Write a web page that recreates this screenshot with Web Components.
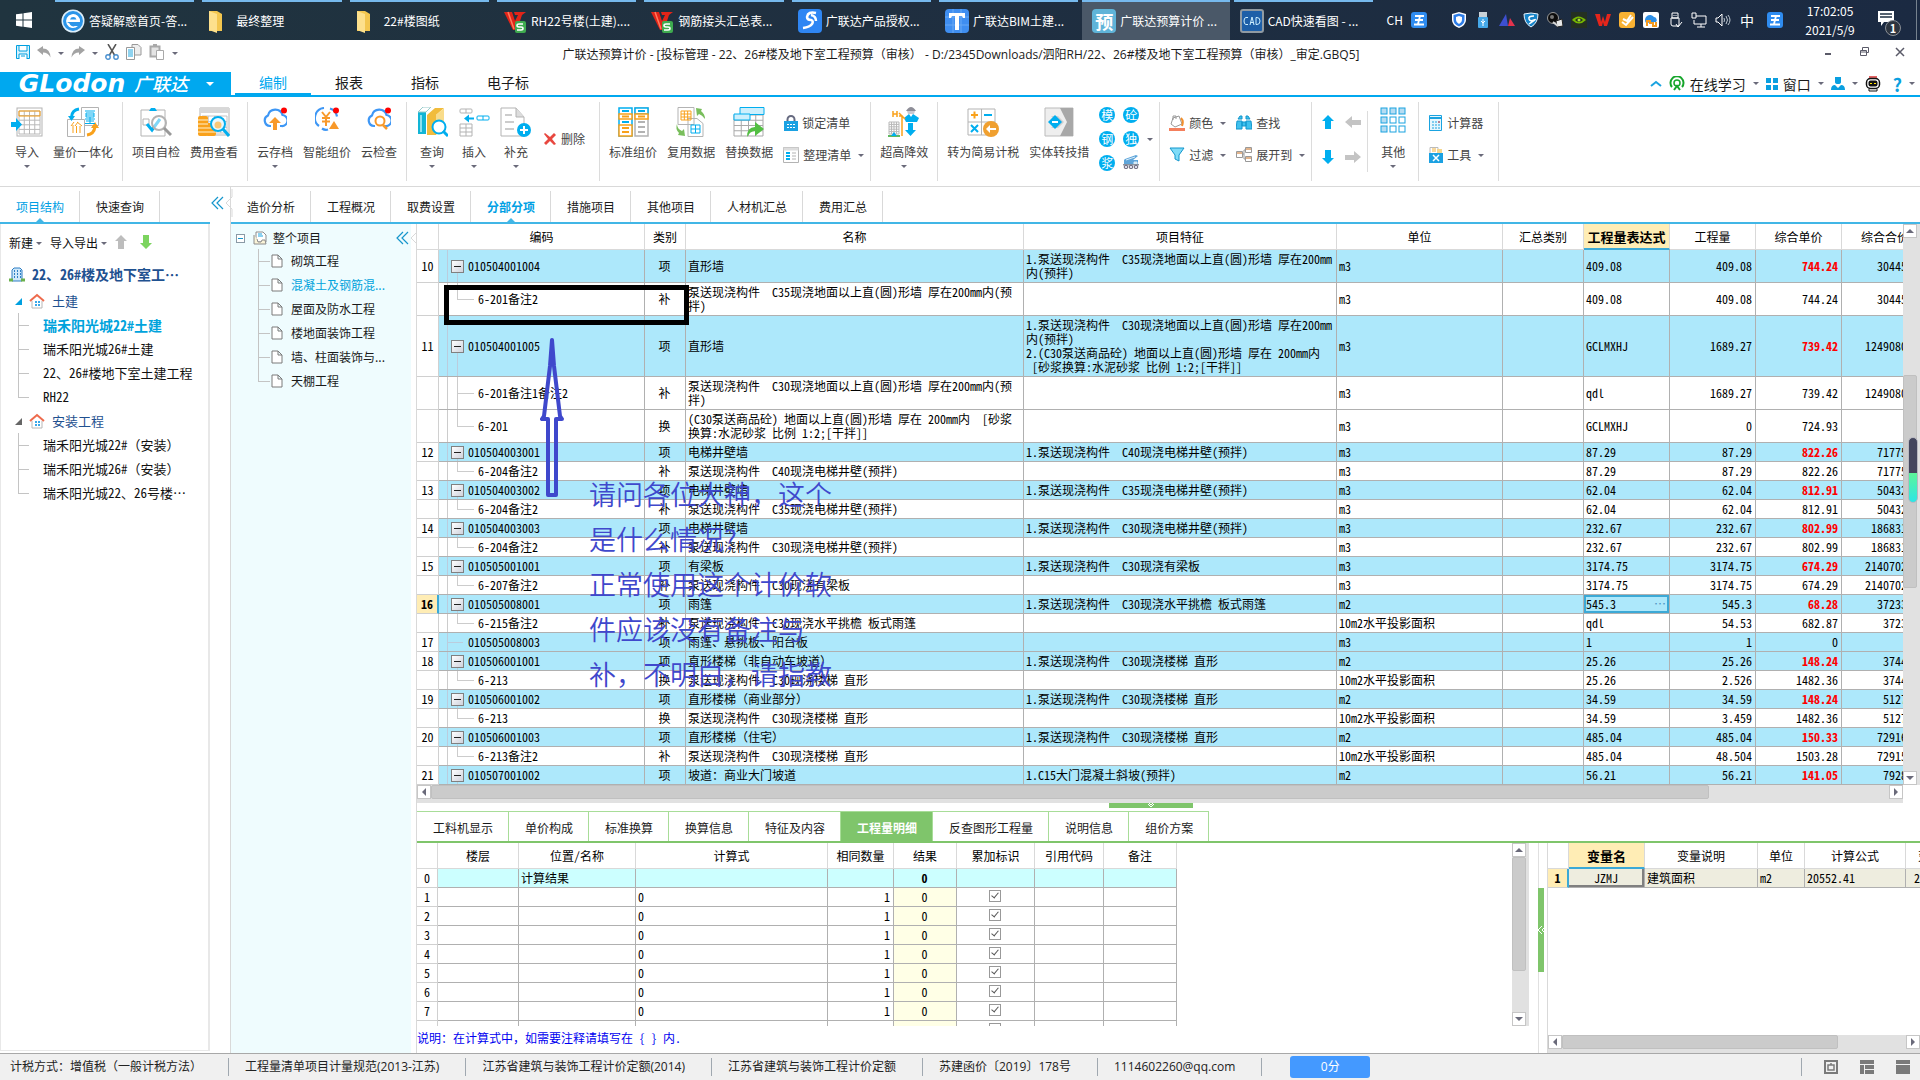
<!DOCTYPE html>
<html lang="zh-CN">
<head>
<meta charset="utf-8">
<title>广联达预算计价</title>
<style>
html,body{margin:0;height:100%}
body{font:12px/16px "Noto Sans CJK SC",sans-serif;color:#1a1a1a;background:#fff;overflow:hidden}
</style>
</head>
<body>
<budget-app></budget-app>
<script>
const SONG = '"Noto Sans Mono CJK SC","Noto Sans CJK SC",monospace';
const BASE = `*{box-sizing:border-box}button{font:inherit;color:inherit;background:none;border:0;padding:0;margin:0;cursor:pointer;text-align:inherit}`;
function define(name, css, html, after){
  const t = document.createElement('template');
  customElements.define(name, class extends HTMLElement{
    constructor(){ super(); this.attachShadow({mode:'open'}); }
    connectedCallback(){
      t.innerHTML = `<style>${BASE}${css}</style>` + (typeof html === 'function' ? html(this) : html);
      this.shadowRoot.replaceChildren(t.content.cloneNode(true));
      if(after) after(this, this.shadowRoot);
    }
  });
}

/* ---------- icons ---------- */
const B='#00aeef', O='#f9a11b', G='#b3b3b3';
const gridLines=(x,y,w,h,nx,ny,c)=>{let s='';for(let i=0;i<=nx;i++)s+=`M${x+w*i/nx} ${y}v${h}`;for(let j=0;j<=ny;j++)s+=`M${x} ${y+h*j/ny}h${w}`;return `<path d="${s}" stroke="${c}" fill="none"/>`};
const cloud='<path d="M8 19H7A5.5 5.5 0 0 1 5 8.5 7.5 7.500 0 0 1 19.500 8 5.500 5.500 0 0 1 18.500 19H17" fill="none" stroke="#3e97f5" stroke-width="2.200"/><circle cx="21" cy="3.500" r="3" fill="#f00"/>';
const folder='<path d="M1 2h8l5 3v17H1z" fill="#f3c64f"/><path d="M1 2l8 3v19l-8-3z" fill="#fde08c"/>';
const wps='<path d="M1 3h8l3 9 3-6h-3l-1-3h12l-4 3-5 15h-4z" fill="#e22418"/><path d="M5 3l6 17" stroke="#ff7a5f" stroke-width="1.500"/><rect x="12" y="12" width="11" height="12" rx="2" fill="#3fab4f"/><path d="M20 15h-4q-2 0-2 1.500t2 1.500h2q2 0 2 1.500t-2 1.500h-4" stroke="#fff" stroke-width="1.500" fill="none"/>';
const wang='<rect width="16" height="16" rx="3" fill="#2f8cf0"/><path d="M4 4h9M4 8h8M3 12.500h10M9 4L7 12" stroke="#fff" stroke-width="1.800" fill="none"/>';
const house='<path d="M3 8v7h10V8" fill="#fff" stroke="#b8b8b8"/><path d="M1 8l7-6 7 6" stroke="#ee6a4c" stroke-width="2" fill="none"/><path d="M6 8h2v2H6zM9 8h2v2H9zM6 11h2v2H6zM9 11h2v2H9z" fill="#3aa7e8"/>';
const ICONS={
 win:[16,16,'<path d="M0 2.300L6.500 1.400v6.200H0zM7.500 1.200L16 0v7.600H7.500zM0 8.600h6.500v6.200L0 13.800zM7.500 8.600H16V16l-8.500-1.200z" fill="#fff"/>'],
 ie:[24,24,'<circle cx="12" cy="12" r="11.500" fill="#dff0fb"/><circle cx="12" cy="12" r="10" fill="#2b95e9"/><path d="M6 13h13a7 7 0 1 0-2 4h-3a4 4 0 0 1-5.500-2.500" fill="#fff"/><path d="M9 10.500h6.500a3.400 3.400 0 0 0-6.500 0z" fill="#2b95e9"/>'],
 folder:[16,24,folder], wps:[24,24,wps],
 gauth:[24,24,'<rect width="24" height="24" rx="4" fill="#2f86f3"/><path d="M18 4q-8-2-9 4 0 3 4 3 3 1 1 4t-9 4M13 6q5 1 5 6" stroke="#fff" stroke-width="2.500" fill="none"/>'],
 gbim:[24,24,'<rect width="24" height="24" rx="4" fill="#3f8ef0"/><path d="M0 8h24M0 16h24M8 0v24M16 0v24" stroke="#69a9f5"/><path d="M4 4h16v5h-2l-1-2h-3v14h-4V7H7L6 9H4z" fill="#fff"/>'],
 cad:[24,24,'<rect x="1" y="1" width="22" height="22" rx="2" fill="#1d5fa8" stroke="#8f9aa3" stroke-width="2"/><path d="M8 8.500H6Q4 8.500 4 12t2 3.500h2M10 16l2-8 2 8M10.500 13.500h3M16 8.500v7h1q3 0 3-3.500t-3-3.500z" stroke="#cdefff" fill="none"/>'],
 wang:[16,16,wang],
 shield:[16,16,'<path d="M8 0l7 2v6q0 5-7 8-7-3-7-8V2z" fill="#fff"/><path d="M8 1.500L13.500 3v5q0 4-5.500 6.500Q2.500 12 2.500 8V3z" fill="#2d7de8"/><path d="M8 4l3 1v3q0 2.500-3 4-3-1.500-3-4V5z" fill="#fff"/>'],
 usbblue:[16,16,'<rect x="4" y="0" width="8" height="5" fill="#c9d2d8"/><rect x="3" y="5" width="10" height="11" rx="1" fill="#45a8e8"/><path d="M8 7v7M6 9l2 2 2-2" stroke="#fff" fill="none"/>'],
 tri:[16,16,'<path d="M7 2L0 14h9z" fill="#3d4fd0"/><path d="M11 6l-2 8h7z" fill="#e2334d"/>'],
 shield2:[16,16,'<path d="M1 2l7-1 7 1q0 9-7 13Q1 11 1 2z" fill="#1684c9" stroke="#e8f5ff"/><path d="M11 4Q5 4 6 7t5 1-5 4" stroke="#fff" stroke-width="1.500" fill="none"/>'],
 disc:[16,16,'<circle cx="6" cy="6" r="5.500" fill="#0c0c0c" stroke="#999"/><path d="M9 9l6-2 1 7-6 1z" fill="#e8e8e8" stroke="#222"/><circle cx="5" cy="5" r="2" fill="#777"/><path d="M6 10l5 4" stroke="#d5d5d5" stroke-width="2"/>'],
 nv:[16,16,'<rect width="16" height="16" fill="#243022"/><path d="M1 8q6-7 14 0-7 7-14 0z" fill="#77b900"/><path d="M4 8q4-4 8 0-4 4-8 0z" fill="#243022"/><circle cx="8" cy="8" r="1.500" fill="#a9e03a"/>'],
 wred:[16,16,'<path d="M0 2h5l1 8 2-6 2 6 2-8h4l-4 12H9L8 10l-1 4H4z" fill="#e5251b"/>'],
 orange:[16,16,'<rect width="16" height="16" rx="3" fill="#f9b233"/><path d="M3 10l4 3 7-8M4 7l4 2 4-6" stroke="#fff" stroke-width="2" fill="none"/>'],
 cloudapp:[16,16,'<rect width="16" height="16" rx="2" fill="#fff"/><path d="M3 11A4 4 0 1 1 11 5a3 3 0 0 1 2 5" fill="#2e8fe6"/><path d="M4 14V9h3v2h3v3h3v-4" stroke="#f49b20" stroke-width="2" fill="none"/>'],
 usb:[16,16,'<path d="M5 1h6v5H5zM4 6h8v8H6q-2 0-2-2zM7 3v1M9 3v1M9 12l2 3 4-5" stroke="#fff" fill="none"/>'],
 pc:[16,16,'<path d="M5 4h10v8H3V8M10 12v3M6 15h8M1 1h4v5H1z" stroke="#fff" fill="none"/>'],
 vol:[16,16,'<path d="M1 6h2l4-4v12l-4-4H1z" stroke="#fff" fill="none"/><path d="M9 6q1 2 0 4M11 4q3 4 0 8M13 3q4 5 0 10" stroke="#bcc6cf" fill="none"/>'],
 note:[28,28,'<path d="M2 3h16v11H8l-3 4v-4H2z" fill="#fff"/><path d="M4 6h12M4 9h12" stroke="#1d2e40" stroke-width="1.500"/><circle cx="17" cy="20" r="7.500" fill="#2d3540" stroke="#8a8f96"/>'],
 save:[14,14,'<path d="M.5.5h13v13H.5z" stroke="#00a0e0" fill="#d7f2fd"/><path d="M3 1v5h8V1M3 14V9h8v5M5 11h4" stroke="#00a0e0" fill="#fff"/>'],
 undo:[14,14,'<path d="M0 5l6-4v2.500q7 0 7.500 9Q11 7.500 6 7.500V10z" fill="#a3a3a3"/>'],
 redo:[14,14,'<path d="M14 5L8 1v2.500Q1 3.500.5 12.500 3 7.500 8 7.500V10z" fill="#a3a3a3"/>'],
 cut:[14,16,'<path d="M3 0l6.500 11M11 0L4.500 11" stroke="#555" stroke-width="1.500"/><circle cx="3" cy="13" r="2.200" stroke="#4a90d0" fill="none" stroke-width="1.400"/><circle cx="11" cy="13" r="2.200" stroke="#4a90d0" fill="none" stroke-width="1.400"/>'],
 copy:[16,16,'<path d="M6 .5h6l3 3V11H6z" fill="#eee" stroke="#999"/><path d="M.5 3.500h8v12h-8z" fill="#fff" stroke="#999"/><path d="M2 6h5M2 8h5M2 10h5M2 12h5" stroke="#1ea7e0"/>'],
 paste:[16,16,'<path d="M1.500 2.500h9v10h-9z" fill="#e4e4e4" stroke="#a9a9a9" stroke-width="2"/><path d="M4 0h4v3H4z" fill="#a9a9a9"/><path d="M7.500 6.500h7v9h-7z" fill="#fff" stroke="#a9a9a9"/>'],
 min:[12,12,'<path d="M3 8h6" stroke="#5a5a68" stroke-width="2"/>'],
 rest:[12,12,'<path d="M2.500 4.500h6v5h-6zM4.500 4V1.500h6v5H9M2.500 6h6" stroke="#5a5a68" fill="none"/>'],
 close:[12,12,'<path d="M2 2l8 8M10 2l-8 8" stroke="#5a5a68" stroke-width="1.500"/>'],
 caret:[12,12,'<path d="M1 8l5-4 5 4" stroke="#1aa3e0" stroke-width="2" fill="none"/>'],
 headset:[16,16,'<path d="M3 11a6.500 6.500 0 1 1 10 0M5 14l3-4 3 4" stroke="#16a52b" stroke-width="2" fill="none"/><circle cx="8" cy="7" r="3" fill="none" stroke="#16a52b" stroke-width="1.500"/>'],
 four:[12,12,'<path d="M0 0h5v5H0zM7 0h5v5H7zM0 7h5v5H0zM7 7h5v5H7z" fill="#0a9fe0"/>'],
 person:[14,14,'<path d="M4 0h6v5q0 2-3 2T4 5zM0 13q0-5 4-5l3 3 3-3q4 0 4 5z" fill="#0a9fe0"/>'],
 robot:[16,16,'<path d="M4 1h8" stroke="#d33" stroke-width="1.500"/><rect x="1.500" y="2.500" width="13" height="10" rx="4" fill="#fff" stroke="#111" stroke-width="1.500"/><rect x="3.500" y="4.500" width="9" height="6" rx="2" fill="#111"/><path d="M5 8l1-1 1 1M9 8l1-1 1 1" stroke="#ffe200" fill="none"/><path d="M4 13v2h8v-2" stroke="#111" fill="none"/>'],
 import:[32,30,`<rect x="6" y="1" width="25" height="28" fill="#fff" stroke="${G}"/>${gridLines(8,4,21,23,4,5,'#b8b8b8')}<path d="M8 4h21v5H8z" fill="none" stroke="${O}"/><path d="M0 15h5v-4l6 6.500-6 6.500v-4H0z" fill="${B}"/>`],
 qp:[32,30,`<path d="M14.500.5h17v18h-17z" fill="#fff" stroke="${G}"/><path d="M.5 12.500h17v17H.5z" fill="#fff" stroke="${G}"/><path d="M12 2Q5 3 4.500 10" stroke="${B}" stroke-width="3" fill="none"/><path d="M1 9h7l-3.500 5z" fill="${B}"/><path d="M20 28q7-1 8-8" stroke="${O}" stroke-width="3" fill="none"/><path d="M24 21h8l-4-6z" fill="${O}"/><path d="M18 4h10M19 6h8v4h-8zM19 8h8M18 12h10M19 14h8M18 16.500h10M23 10v6.500" stroke="${B}" fill="none"/><path d="M7 15l-3 4M6 18v8M11 15l-3 4M10 15l5 4M9.500 19v7M13 19v7" stroke="${O}" fill="none"/>`],
 check:[32,30,`<path d="M1 3h24v26H1z" fill="#fff" stroke="${G}"/><path d="M9 4h8l-2-3h-4z" fill="${B}"/><path d="M3 12h6v6H3z" fill="none" stroke="${G}"/><path d="M7 17l5 6 8-11" stroke="${B}" stroke-width="3" fill="none"/><circle cx="19" cy="16" r="7" fill="#fff" fill-opacity=".5" stroke="${G}" stroke-width="2"/><path d="M24 21l7 7" stroke="#999" stroke-width="3"/>`],
 fee:[32,30,`<path d="M2 1h29v27H2z" fill="#fff" stroke="${G}"/><path d="M2 1h29v5H2z" fill="#d8d8d8"/>${gridLines(4,9,25,17,4,3,'#c4c4c4')}<rect x="0" y="9" width="10" height="20" rx="2" fill="${O}"/><rect x="8" y="16" width="10" height="13" rx="2" fill="${O}"/><path d="M0 13h10M0 17h10M0 21h18M0 25h18" stroke="#fff2d0"/><circle cx="20" cy="17" r="7" fill="#e8f8fe" stroke="${B}" stroke-width="2"/><circle cx="20" cy="18" r="3.500" fill="#f8c777"/><path d="M25 22l6 7" stroke="${B}" stroke-width="3"/>`],
 cloudup:[24,24,cloud+'<path d="M12 10l6 6h-4v7h-4v-7H6z" fill="#f8992a"/>'],
 smart:[24,24,'<path d="M9 1A10 10 0 0 0 4 19M15 1.500a10 10 0 0 1 7 8M7 21.500q3 2 6 1" fill="none" stroke="#3e97f5" stroke-width="2.200"/><path d="M7 5l4 5 4-5M7 11h8M7 14.500h8M11 10v9" stroke="#f8992a" stroke-width="2" fill="none"/><path d="M19 14l5 8H14z" fill="#f8992a"/><circle cx="21" cy="3.500" r="3" fill="#f00"/>'],
 cloudq:[24,24,cloud+'<circle cx="13" cy="14" r="4.500" fill="#fff" stroke="#f8992a" stroke-width="2"/><path d="M16 18l4 4" stroke="#f8992a" stroke-width="2.500"/>'],
 books:[32,30,`<path d="M2 5l5-5h8l-5 5v22H2z" fill="#12b5d6"/><path d="M2 5l5-5h8l-5 5z" fill="#fff" stroke="#9cc"/><path d="M11 8l8-7h9l-8 7v20h-9z" fill="#f1bc3c"/><path d="M20 8l8-7v19l-8 8z" fill="#f9dc8a"/><path d="M5 8v17" stroke="#8ce1f0" stroke-width="2"/><circle cx="23" cy="20" r="6.500" fill="#fff" stroke="${B}" stroke-width="2"/><path d="M27 24l5 5" stroke="${B}" stroke-width="3"/>`],
 insert:[32,30,`<rect x="2" y="2" width="12" height="4" rx="1" fill="#fff" stroke="${G}"/><path d="M8 2v4" stroke="${G}"/><path d="M6 11.500l5-4v3h5v2h-5v3z" fill="${B}"/><rect x="19" y="9" width="12" height="4" rx="1" fill="#fff" stroke="${B}"/><path d="M25 9v4" stroke="${B}"/>${gridLines(2,17,12,12,2,3,G)}`],
 add:[32,30,`<path d="M1 1h15l8 9v19H1z" fill="#fff" stroke="${G}"/><path d="M16 1v9h8" fill="#ddd" stroke="${G}"/><path d="M5 8h7M5 15h9M5 22h9" stroke="#ccc" stroke-width="2"/><circle cx="24" cy="23" r="7" fill="${B}"/><path d="M24 19v8M20 23h8" stroke="#fff" stroke-width="2"/>`],
 del:[12,12,'<path d="M1 0l5 4 4-4 2 2-4 4 4 5-2 1-4-4-4 4-2-2 4-4-4-5z" fill="#e8473f"/>'],
 std:[32,30,`<path d="M2 1h13v28H2z" fill="#fff" stroke="${B}" stroke-width="1.500"/><path d="M18 1h13v28H18z" fill="#fff" stroke="${G}" stroke-width="1.500"/><path d="M18 1h13v6H18z" fill="#fff" stroke="${B}" stroke-width="1.500"/><path d="M2 7h13v5H2zM2 18h13v11H2z" fill="#fff" stroke="${O}" stroke-width="1.500"/><path d="M18 7h13v5H18z" fill="#fff" stroke="${O}" stroke-width="1.500"/><path d="M5 4h7M5 15h7M21 4h7" stroke="${B}" stroke-width="2"/><path d="M5 9.500h7M5 21h7M5 25h7M21 9.500h7" stroke="${O}" stroke-width="2"/><path d="M21 15h7M21 20h7M21 25h7" stroke="${G}" stroke-width="2"/>`],
 reuse:[32,30,`<path d="M3 .5h16v17H3zM13 11.500h9l6 5v13H13z" fill="#fff" stroke="${G}"/>${gridLines(6,4,10,9,3,3,O)}${gridLines(16,18,9,8,2,2,B)}<path d="M21 1l6 1-1 2q4 3 4 8-3-4-6-5l-2 2z" fill="#79be5c"/><path d="M2 17q0 5 5 7l2-2 1 7-7-1 1-2q-4-4-2-9z" fill="#79be5c"/>`],
 replace:[32,30,`${gridLines(1,8,29,21,4,4,'#a9a9a9')}<path d="M7 .5h24v7H7z" fill="#cdeffc" stroke="${B}"/><path d="M1 7h16v6H1z" fill="#cdeffc" stroke="${B}"/><path d="M14 30q0-10 8-10v-5l9 7-9 7v-5q-5 0-8 6z" fill="#53bf43"/>`],
 lock:[14,16,`<path d="M3.500 8V4.500a3.500 3.500 0 0 1 7 0V8" stroke="#666a80" stroke-width="2" fill="none"/><path d="M0 6h14v10H0z" fill="#1ba1e2"/><path d="M3 9.500h8M3 12.500h8" stroke="#fff" stroke-dasharray="2 1"/>`],
 tidy:[16,16,`<path d="M.5.5h15v15H.5z" fill="#fff" stroke="${G}"/><path d="M.5.5h15v3H.5z" fill="#ddd"/><path d="M3 6h4M3 9h4M3 12h4" stroke="${B}" stroke-width="2"/><path d="M9 6h4M9 9h4M9 12h4" stroke="${G}"/>`],
 high:[32,30,`<path d="M18 4q5-8 10 0z" fill="#8e8e98"/><path d="M19 4h8l-1 3h-6z" fill="#c9c9d2"/><path d="M16 11l5-4 2 3 2-3 6 4-2 4H18z" fill="${B}"/><path d="M20 16h5v7h3l-5.500 6-5.500-6h3z" fill="${B}"/><path d="M5 4v6M9 4v6M5 7h4M14 29V9h-3M11 6l6 6" stroke="${O}" stroke-width="1.500" fill="none"/>${gridLines(1,15,10,12,4,5,'#b9b9b9')}<path d="M0 29h12" stroke="#5fb85f" stroke-width="2"/><path d="M3 29l3-4 3 4z" fill="${B}"/>`],
 simple:[32,30,`<path d="M1 2h27v26H1z" fill="#fff" stroke="${G}"/><path d="M14.500 2v26M1 15h27" stroke="${G}"/><path d="M4 8h7M7.500 4.500v7" stroke="${O}" stroke-width="2"/><path d="M17 8h8" stroke="${B}" stroke-width="2"/><path d="M4 18l7 7M11 18l-7 7" stroke="${B}" stroke-width="2"/><circle cx="24" cy="22" r="8" fill="#f0a030"/><path d="M19 22l4-4v3h6v2h-6v3z" fill="#fff"/>`],
 entity:[30,30,`<path d="M1 1h28v28H1z" fill="#eee" stroke="#bbb"/><path d="M16 1h13v28H16l7-14z" fill="#a8a8a8"/><path d="M13 15L7 9h7l6 6-6 6H7z" fill="#cfcfcf"/><path d="M4 15l7-7 7 7-7 7z" fill="${B}"/><path d="M8 15h6" stroke="#fff" stroke-width="2"/>`],
 truck:[16,14,'<path d="M2 4L13 0l2 1-5 4h5v5H1V5z" fill="#5ea5da"/><path d="M3 5l9-3M11 7h3v2h-3z" stroke="#d9ecf8" fill="#d9ecf8"/><path d="M0 9h16v1.500H0z" fill="#8a93a0"/><circle cx="3" cy="12" r="1.800" fill="#dde" stroke="#667"/><circle cx="8" cy="12" r="1.800" fill="#dde" stroke="#667"/><circle cx="13" cy="12" r="1.800" fill="#dde" stroke="#667"/>'],
 paint:[16,16,'<path d="M4 3l6-2 3 8-7 3-4-3z" fill="#fff" stroke="#999"/><path d="M4 5V1h3v3" stroke="#999" fill="none"/><path d="M12 3q3 3 1 8" stroke="#f28f2c" stroke-width="2" fill="none"/><path d="M0 13h16v3H0z" fill="#f47f5c"/>'],
 find:[16,16,`<path d="M2 4h4v-3h-2zM10 1h2l2 3h-4zM1 6h5v8H0zM10 6h5l1 8h-6zM6 7h4v4H6z" fill="#3fc1ee" stroke="#1396cc"/>`],
 filter:[16,16,'<path d="M1 1h14l-5 7v6l-4-2V8z" fill="#7fdcf8" stroke="#1396cc"/>'],
 expand:[16,16,'<path d="M.5 4.500h6v6h-6zM9.500.5h6v5h-6zM9.500 9.500h6v5h-6zM6 7h2v-4h1.500M8 7v5h1.500" fill="#fff" stroke="#999"/><path d="M1 5h5v2H1zM10 1h5v2h-5zM10 10h5v2h-5z" fill="#e2b48c"/>'],
 up:[12,14,'<path d="M6 0l6 6H9v8H3V6H0z" fill="currentColor"/>'],
 down:[12,14,'<path d="M6 14l6-6H9V0H3v8H0z" fill="currentColor"/>'],
 left:[16,14,'<path d="M0 7l7-6v4h9v5H7v3z" fill="currentColor"/>'],
 right:[16,14,'<path d="M16 7L9 1v4H0v5h9v3z" fill="currentColor"/>'],
 other:[26,26,[0,1,2,3,4,5,6,7,8].map(i=>`<rect x="${1+(i%3)*9}" y="${1+Math.floor(i/3)*9}" width="6" height="6" fill="${i<4||i==6?'#b5dcf2':'#fff'}" stroke="#1aa3e0"/>`).join('')],
 calc:[13,16,'<path d="M.5.5h12v15H.5z" fill="#e7f7fe" stroke="#1aa3e0"/><path d="M1 3h11" stroke="#1aa3e0" stroke-width="2"/><path d="M3 7h8M3 10h8M3 13h8" stroke="#1aa3e0" stroke-dasharray="2 1"/><path d="M9 7h2" stroke="#e33"/>'],
 tool:[14,16,'<path d="M1 .5h8v6H1z" fill="#fff" stroke="#bbb"/><path d="M3 2h4M3 4h4" stroke="#f0b23c"/><path d="M8 2h5v5H8z" fill="#f4d68f"/><path d="M0 6h14v10H0z" fill="#1ba1e2"/><path d="M4 8l6 6M10 8l-6 6" stroke="#fff" stroke-width="1.500"/>'],
 building:[16,16,'<path d="M3 15V4l2-2h6l2 2v11z" fill="#cfe8fa" stroke="#2f7fc4"/><path d="M5 5h1M8 5h1M11 5h1M5 8h1M8 8h1M11 8h1M5 11h1M8 11h1M11 11h1" stroke="#2f7fc4" stroke-width="2"/><path d="M0 14h4M12 14h4" stroke="#6ab04c" stroke-width="3"/>'],
 house:[16,16,house],
 project:[14,14,'<path d="M3 1h7l3 3v7H3z" fill="#fff" stroke="#8c8c8c"/><path d="M1 4v9h12l-1-4H9l-1 2H5L4 8" fill="#faf4d8" stroke="#8c8c8c"/><path d="M5 3h4M5 5h5" stroke="#1aa3e0"/>'],
 doc:[12,14,'<path d="M1 1h6l4 4v8H1zM7 1v4h4" fill="#fff" stroke="#7a7a7a"/>'],
 collapse:[24,32,'<path d="M8 10l-6 6 6 6M13 10l-6 6 6 6" stroke="#1596cc" stroke-width="1.200" fill="none"/><path d="M22 2v8l-6 6 6 6v8" stroke="#d9d9d9" fill="none"/>'],
 s1:[14,14,'<path d="M1 1h12v12H1z" fill="none" stroke="#7a7a7a" stroke-width="2"/><path d="M4 5h6v5H4zM7 3v2" fill="none" stroke="#7a7a7a" stroke-width="1.500"/>'],
 s2:[14,14,'<path d="M0 0h14v4H0zM0 5h4v9H0zM5 5h9v4H5zM5 10h9v4H5z" fill="#7a7a7a"/>'],
 s3:[14,14,'<path d="M0 0h14v4H0zM0 5h14v9H0z" fill="#7a7a7a"/>']
};
define('app-icon', `:host{display:inline-flex;flex:none}svg{display:block}`, h=>{
  const [w,ht,s]=ICONS[h.getAttribute('name')];
  return `<svg width="${w}" height="${ht}" viewBox="0 0 ${w} ${ht}" aria-hidden="true">${s}</svg>`;
});
const ic=n=>`<app-icon name="${n}"></app-icon>`;
define('drop-mark', `:host{display:inline-block;flex:none;border:solid transparent;border-width:3px 3px 0;border-top-color:#6a6a7a;width:0;height:0}`, '');

/* ---------- taskbar ---------- */
define('task-item', `
:host{display:flex;flex:1;min-width:0;padding:0 4px}
:host([active]) button{background:#4a5868;margin:0 -4px;padding:0 4px 0 10px}
button{flex:1;min-width:0;display:flex;align-items:center;gap:4px;border-top:2px solid #76b9ed;padding:0 0 0 6px;color:#fff;white-space:nowrap}
.i{width:24px;display:flex}
.glyph{width:24px;height:24px;border-radius:4px;background:#5fb4d8;font-weight:700;font-size:18px;line-height:24px;text-align:center;color:#fff}`,
h=>`<button>${h.hasAttribute('glyph')?`<span class="glyph">${h.getAttribute('glyph')}</span>`:`<span class="i">${ic(h.getAttribute('icon'))}</span>`}<slot></slot></button>`);
define('task-bar', `
:host{display:flex;height:40px;background:linear-gradient(90deg,#20343f,#1f2f40 45%,#1b2a42);color:#fff}
.start{width:51px;padding-left:16px;display:flex;align-items:center}
.items{display:flex;flex:0 1 1326px;min-width:0}
.tray{margin-left:auto;display:flex;align-items:center;flex:none}
.ime{display:flex;gap:8px;align-items:center;margin-right:24px}
.ic{display:flex;gap:8px;align-items:center;margin-right:9px}
.zh{font-size:14px;margin-right:13px}
.clock{width:64px;margin:0 14px 0 15px;text-align:center;line-height:19px}
.n{position:relative;display:flex;margin:4px 12px 0 0;padding:0}
.n b{position:absolute;left:0;width:34px;top:12px;text-align:center;font-size:11px}
.edge{width:4px;height:40px;border-left:1px solid #76828e}`,
`<button class="start" aria-label="开始">${ic('win')}</button>
<div class="items">
<task-item icon="ie">答疑解惑首页-答...</task-item><task-item icon="folder">最终整理</task-item><task-item icon="folder">22#楼图纸</task-item>
<task-item icon="wps">RH22号楼(土建)....</task-item><task-item icon="wps">钢筋接头汇总表...</task-item><task-item icon="gauth">广联达产品授权...</task-item>
<task-item icon="gbim">广联达BIM土建...</task-item><task-item glyph="预" active>广联达预算计价 ...</task-item><task-item icon="cad">CAD快速看图 - ...</task-item></div>
<div class="tray"><span class="ime">CH ${ic('wang')}</span><span class="ic">${['shield','usbblue','tri','shield2','disc','nv','wred','orange','cloudapp','usb','pc','vol'].map(ic).join('')}</span>
<span class="zh">中</span>${ic('wang')}<div class="clock">17:02:05<br>2021/5/9</div><button class="n" aria-label="通知">${ic('note')}<b>1</b></button><span class="edge"></span></div>`);

/* ---------- title and menu ---------- */
define('title-bar', `
:host{display:grid;grid-template-columns:1fr auto 1fr;align-items:center;height:32px;padding:0 14px 6px 16px}
div{display:flex;align-items:center}
.q{gap:7px}
.w{justify-content:flex-end;gap:24px}
h1{font:12px/16px "Open Sans","Noto Sans CJK SC",sans-serif;margin:4px 0 0;white-space:nowrap}`,
`<div class="q">${['save','undo'].map(n=>`<button>${ic(n)}</button>`).join('')}<drop-mark></drop-mark><button>${ic('redo')}</button><drop-mark></drop-mark>${['cut','copy','paste'].map(n=>`<button>${ic(n)}</button>`).join('')}<drop-mark></drop-mark></div>
<h1>广联达预算计价 - [投标管理 - 22、26#楼及地下室工程预算（审核） - D:/2345Downloads/泗阳RH/22、26#楼及地下室工程预算（审核）_审定.GBQ5]</h1>
<div class="w">${['min','rest','close'].map(n=>`<button>${ic(n)}</button>`).join('')}</div>`);
define('menu-bar', `
:host{display:flex;height:25px;border-bottom:2px solid #00a8ef;font-size:14px;line-height:20px}
.logo{width:231px;height:23px;background:#00a8ef;color:#fff;display:flex;align-items:center;padding-left:14px;gap:4px;margin-right:4px}
.logo i{font:italic 700 25px/23px "DejaVu Sans","Liberation Sans",sans-serif;width:116px;text-align:center}
.logo b{font-size:18px;line-height:23px;font-weight:500;font-style:italic}
.logo drop-mark{border-width:4px 4px 0;border-top-color:#fff;margin-left:14px}
nav{display:flex}
nav button{padding:0 24px 3px}
nav button.on{color:#00a8ef;border-bottom:2px solid #00a8ef;padding-bottom:1px}
.r{margin-left:auto;display:flex;align-items:center;gap:7px;padding-right:5px}
.r button{display:flex;align-items:center;gap:5px}
.r .h{font-size:18px;color:#0a9fe0;font-weight:700;margin-left:5px}`,
`<button class="logo"><i>GLodon</i><b>广联达</b><drop-mark></drop-mark></button>
<nav><button class="on">编制</button><button>报表</button><button>指标</button><button>电子标</button></nav>
<div class="r"><button aria-label="收起功能区">${ic('caret')}</button><button>${ic('headset')}在线学习</button><drop-mark></drop-mark><button>${ic('four')}窗口</button><drop-mark></drop-mark><button aria-label="用户">${ic('person')}</button><drop-mark></drop-mark><button aria-label="助手">${ic('robot')}</button><button class="h">?</button><drop-mark></drop-mark></div>`);

/* ---------- ribbon ---------- */
define('ribbon-button', `
:host{display:block;flex:none}
button{display:flex;flex-direction:column;align-items:center;min-width:32px;color:#444;white-space:nowrap}
.i{height:30px;display:flex;margin-bottom:7px}
drop-mark{margin-top:5px}`,
h=>`<button><span class="i">${ic(h.getAttribute('icon'))}</span><slot></slot>${h.hasAttribute('drop')?'<drop-mark></drop-mark>':''}</button>`);
define('ribbon-mini', `
:host{display:block;flex:none}
button{display:flex;align-items:center;height:16px;gap:4px;color:#444;white-space:nowrap}
.i{min-width:15px;display:flex;justify-content:center}
drop-mark{margin-left:3px}`,
h=>`<button><span class="i">${ic(h.getAttribute('icon'))}</span><slot></slot>${h.hasAttribute('drop')?'<drop-mark></drop-mark>':''}</button>`);
define('ribbon-group', `:host{display:flex;gap:10px;padding:5px 9px 0;border-right:1px solid #dcdcdc;margin:5px 0;flex:none}:host([short]){margin:14px 0;padding-top:0}`, '<slot></slot>');
define('ribbon-bar', `
:host{display:flex;height:90px;border-bottom:1px solid #d9d9d9}
.first{padding-left:11px}
.wide{padding-right:14px}
.slim{padding-right:6px}
.col{display:flex;flex-direction:column;gap:16px;padding-top:8px}
.mid{padding-top:24px}
.dots{display:grid;grid-template-columns:16px 16px 6px;gap:8px;align-content:start;align-items:center}
.dots button{width:16px;height:16px;border-radius:8px;background:#00aeef;color:#fff;text-align:center;font-size:12px;line-height:16px}
.dots button.p{background:none;border-radius:0}
.arr{display:grid;grid-template-columns:14px 16px;gap:18px 10px;align-content:start;justify-items:center;padding-top:4px;color:#c4c4c4}
.arr .b{color:#00aeef}`,
`<ribbon-group class="first"><ribbon-button icon="import" drop>导入</ribbon-button><ribbon-button icon="qp" drop>量价一体化</ribbon-button></ribbon-group>
<ribbon-group><ribbon-button icon="check">项目自检</ribbon-button><ribbon-button icon="fee">费用查看</ribbon-button></ribbon-group>
<ribbon-group><ribbon-button icon="cloudup" drop>云存档</ribbon-button><ribbon-button icon="smart">智能组价</ribbon-button><ribbon-button icon="cloudq">云检查</ribbon-button></ribbon-group>
<ribbon-group class="wide"><ribbon-button icon="books" drop>查询</ribbon-button><ribbon-button icon="insert" drop>插入</ribbon-button><ribbon-button icon="add" drop>补充</ribbon-button><ribbon-mini class="mid" icon="del">删除</ribbon-mini></ribbon-group>
<ribbon-group class="slim"><ribbon-button icon="std">标准组价</ribbon-button><ribbon-button icon="reuse">复用数据</ribbon-button><ribbon-button icon="replace">替换数据</ribbon-button><div class="col"><ribbon-mini icon="lock">锁定清单</ribbon-mini><ribbon-mini icon="tidy" drop>整理清单</ribbon-mini></div></ribbon-group>
<ribbon-group><ribbon-button icon="high" drop>超高降效</ribbon-button></ribbon-group>
<ribbon-group class="slim"><ribbon-button icon="simple">转为简易计税</ribbon-button><ribbon-button icon="entity">实体转技措</ribbon-button><div class="dots"><button>模</button><button>砼</button><span></span><button>钢</button><button>独</button><drop-mark></drop-mark><button>浆</button><button class="p" aria-label="运输">${ic('truck')}</button></div></ribbon-group>
<ribbon-group class="slim"><div class="col"><ribbon-mini icon="paint" drop>颜色</ribbon-mini><ribbon-mini icon="filter" drop>过滤</ribbon-mini></div><div class="col"><ribbon-mini icon="find">查找</ribbon-mini><ribbon-mini icon="expand" drop>展开到</ribbon-mini></div></ribbon-group>
<ribbon-group short class="slim"><div class="arr"><button class="b" aria-label="上移">${ic('up')}</button><button aria-label="左移">${ic('left')}</button><button class="b" aria-label="下移">${ic('down')}</button><button aria-label="右移">${ic('right')}</button></div></ribbon-group>
<ribbon-group><ribbon-button icon="other" drop>其他</ribbon-button></ribbon-group>
<ribbon-group class="wide"><div class="col"><ribbon-mini icon="calc">计算器</ribbon-mini><ribbon-mini icon="tool" drop>工具</ribbon-mini></div></ribbon-group>`);

/* ---------- tab strips ---------- */
define('tab-strip', `
:host{display:flex;height:37px;padding-top:4px;border-bottom:2px solid #41b6e6}
button{padding:0 15px 0 16px;border-right:1px solid #d9d9d9;white-space:nowrap;position:relative;flex:none}
button.on{color:#00a0e4}
:host([strong]) button.on{font-weight:700}
button.on::after{content:"";position:absolute;left:50%;margin-left:-4px;bottom:0;border:4px solid transparent;border-top:0;border-bottom-color:#41b6e6}
:host([green]){height:32px;padding:0;border-top:1px solid #a8dd98;border-bottom:2px solid #7fc56b;align-self:flex-start}
:host([green]) button{border-color:#a8dd98;padding-top:3px}
:host([green]) button.on{background:#7fc56b;color:#fff;font-weight:700}
:host([green]) button.on::after{display:none}`,
h=>{const on=+h.getAttribute('on');return h.getAttribute('tabs').split(',').map((t,i)=>`<button role="tab" class="${i==on?'on':''}">${t}</button>`).join('')});

/* ---------- scroll bar: start / thumb / end shares ---------- */
define('scroll-bar', `
:host{display:flex;flex-direction:column;width:17px;background:#e1e1e1;flex:none}
:host([h]){flex-direction:row;width:auto;height:18px;align-items:flex-start}
button{width:14px;height:14px;background:#fff;border:1px solid #c6c6c6;display:flex;align-items:center;justify-content:center;flex:none}
.t{background:#cbcbcb;border:1px solid #c0c0c0;border-radius:2px;width:14px}
:host([h]) .t{width:auto;height:14px}
i{border:4px solid transparent}
.u{border-top:0;border-bottom-color:#6a6a7a}.d{border-bottom:0;border-top-color:#6a6a7a}
.l{border-left:0;border-right-color:#6a6a7a}.r{border-right:0;border-left-color:#6a6a7a}`,
h=>{const [a,b,c]=h.getAttribute('shares').split(' ');const z=h.hasAttribute('h');
return `<button aria-label="向前滚动"><i class="${z?'l':'u'}"></i></button><span style="flex:${a}"></span><span class="t" style="flex:${b}"></span><span style="flex:${c}"></span><button aria-label="向后滚动"><i class="${z?'r':'d'}"></i></button>`});

/* ---------- project tree ---------- */
define('project-tree', `
:host{display:flex;flex-direction:column;flex:1;border:solid #e8e8e8;border-width:0 2px 1px 1px;margin-bottom:2px;font-size:13px;color:#111}
.bar{display:flex;align-items:center;height:35px;padding:3px 0 0 8px;gap:3px;font-size:12px}
.bar drop-mark{margin-right:5px}.bar button{white-space:nowrap}
.up{color:#bdbdbd;margin:0 10px 0 0}.dn{color:#7cd45f}
.tree{font-family:${SONG};white-space:nowrap}
.row{display:flex;align-items:center;height:24px}
.root{height:30px;padding-left:8px;gap:7px;font-weight:700;font-size:14px;color:#1f5190}
.grp{padding-left:14px;gap:7px;color:#1f5190}
.grp::before{content:"";border-bottom:7px solid #666;border-left:7px solid transparent}
.grp.a::before{border-bottom-color:#00a0e0}
.leaf{margin-left:17px;padding-left:25px;background:linear-gradient(#c4c4c4,#c4c4c4) 0 0/1px 100% no-repeat,linear-gradient(#c4c4c4,#c4c4c4) 0 50%/11px 1px no-repeat}
.leaf.end{background-size:1px 50%,11px 1px}
.sel{font-weight:700;font-size:14px;color:#00a3dc}`,
`<div class="bar"><button>新建</button><drop-mark></drop-mark><button>导入导出</button><drop-mark></drop-mark><button class="up" aria-label="上移">${ic('up')}</button><button class="dn" aria-label="下移">${ic('down')}</button></div>
<div class="tree"><div class="row root">${ic('building')}22、26#楼及地下室工⋯</div>
<div class="row grp a">${ic('house')}土建</div><div class="row leaf sel">瑞禾阳光城22#土建</div><div class="row leaf">瑞禾阳光城26#土建</div><div class="row leaf">22、26#楼地下室土建工程</div><div class="row leaf end">RH22</div>
<div class="row grp">${ic('house')}安装工程</div><div class="row leaf">瑞禾阳光城22#（安装）</div><div class="row leaf">瑞禾阳光城26#（安装）</div><div class="row leaf end">瑞禾阳光城22、26号楼⋯</div></div>`);
define('section-tree', `
:host{display:block;width:180px;flex:none;background:#effcfe;position:relative;white-space:nowrap;padding-top:1px}
.row{display:flex;align-items:center;height:24px}
.root{padding:2px 0 0 5px;gap:6px}
.root button{width:9px;height:9px;border:1px solid #8a9aa6;background:linear-gradient(#1596cc,#1596cc) center/5px 1px no-repeat #fff;margin-right:2px}
.leaf{margin-left:27px;padding-left:13px;gap:8px;background:linear-gradient(#c4c4c4,#c4c4c4) 0 0/1px 100% no-repeat,linear-gradient(#c4c4c4,#c4c4c4) 0 50%/12px 1px no-repeat}
.leaf.end{background-size:1px 50%,12px 1px}
.sel{color:#00a3dc}
.fold{position:absolute;right:-8px;top:-2px}`,
`<div class="row root"><button aria-label="折叠"></button>${ic('project')}整个项目</div>`+['砌筑工程','混凝土及钢筋混...','屋面及防水工程','楼地面装饰工程','墙、柱面装饰与...','天棚工程'].map((t,i)=>`<div class="row leaf ${i==1?'sel':''} ${i==5?'end':''}">${ic('doc')}${t}</div>`).join('')+`<button class="fold" aria-label="收起">${ic('collapse')}</button>`);

/* ---------- tables ---------- */
const TABLE=`
table{border-collapse:separate;border-spacing:0;table-layout:fixed;font:12px/14px ${SONG};color:#000}
th,td{padding:2px 3px 2px 2px;border-right:1px solid #b0b0b0;border-bottom:1px solid #b0b0b0;white-space:pre;overflow:hidden;text-align:left;font-weight:400}
thead th{height:26px;padding:1px 0 0;text-align:center;border-color:#d9d9d9;background:#fff}
tbody th{text-align:center;padding:2px 0;border-color:#d0d0d0;background:#fff}
.c{text-align:center}.n{text-align:right}
th.cur{background:#ffedb5;font-weight:700}
thead th.cur{border-bottom:2px solid #3ca9d6;font-size:13px}
tbody th.cur{border-right:2px solid #3ca9d6}`;
const P='泵送现浇构件  ';
const ROWS=[
['10','010504001004','项','直形墙','1.'+P+'C35现浇地面以上直(圆)形墙 厚在200mm\n内(预拌)','m3','409.08','409.08','744.24','304453.7'],
['','6-201备注2','补',P+'C35现浇地面以上直(圆)形墙 厚在200mm内(预\n拌)','','m3','409.08','409.08','744.24','304453.7'],
['11','010504001005','项','直形墙','1.'+P+'C30现浇地面以上直(圆)形墙 厚在200mm\n内(预拌)\n2.(C30泵送商品砼) 地面以上直(圆)形墙 厚在 200mm内\n [砂浆换算:水泥砂浆 比例 1:2;[干拌]]','m3','GCLMXHJ','1689.27','739.42','1249080.02'],
['','6-201备注1备注2','补',P+'C30现浇地面以上直(圆)形墙 厚在200mm内(预\n拌)','','m3','qdl','1689.27','739.42','1249080.02'],
['','6-201','换','(C30泵送商品砼) 地面以上直(圆)形墙 厚在 200mm内  [砂浆\n换算:水泥砂浆 比例 1:2;[干拌]]','','m3','GCLMXHJ','0','724.93',''],
['12','010504003001','项','电梯井壁墙','1.'+P+'C40现浇电梯井壁(预拌)','m3','87.29','87.29','822.26','71775.08'],
['','6-204备注2','补',P+'C40现浇电梯井壁(预拌)','','m3','87.29','87.29','822.26','71775.08'],
['13','010504003002','项','电梯井壁墙','1.'+P+'C35现浇电梯井壁(预拌)','m3','62.04','62.04','812.91','50432.94'],
['','6-204备注2','补',P+'C35现浇电梯井壁(预拌)','','m3','62.04','62.04','812.91','50432.94'],
['14','010504003003','项','电梯井壁墙','1.'+P+'C30现浇电梯井壁(预拌)','m3','232.67','232.67','802.99','186831.68'],
['','6-204备注2','补',P+'C30现浇电梯井壁(预拌)','','m3','232.67','232.67','802.99','186831.68'],
['15','010505001001','项','有梁板','1.'+P+'C30现浇有梁板','m3','3174.75','3174.75','674.29','2140702.18'],
['','6-207备注2','补',P+'C30现浇有梁板','','m3','3174.75','3174.75','674.29','2140702.18'],
['16','010505008001','项','雨篷','1.'+P+'C30现浇水平挑檐 板式雨篷','m2','545.3','545.3','68.28','37233.08'],
['','6-215备注2','补',P+'C30现浇水平挑檐 板式雨篷','','10m2水平投影面积','qdl','54.53','682.87','37236.9'],
['17','010505008003','项','雨篷、悬挑板、阳台板','','m3','1','1','0',''],
['18','010506001001','项','直形楼梯（非自动车坡道）','1.'+P+'C30现浇楼梯 直形','m2','25.26','25.26','148.24','3744.54'],
['','6-213','换',P+'C30现浇楼梯 直形','','10m2水平投影面积','25.26','2.526','1482.36','3744.44'],
['19','010506001002','项','直形楼梯（商业部分）','1.'+P+'C30现浇楼梯 直形','m2','34.59','34.59','148.24','5127.62'],
['','6-213','换',P+'C30现浇楼梯 直形','','10m2水平投影面积','34.59','3.459','1482.36','5127.48'],
['20','010506001003','项','直形楼梯（住宅）','1.'+P+'C30现浇楼梯 直形','m2','485.04','485.04','150.33','72916.06'],
['','6-213备注2','补',P+'C30现浇楼梯 直形','','10m2水平投影面积','485.04','48.504','1503.28','72915.09'],
['21','010507001002','项','坡道：商业大门坡道','1.C15大门混凝土斜坡(预拌)','m2','56.21','56.21','141.05','7928.42']];
define('cost-grid', TABLE+`
:host{display:grid;grid-template-columns:minmax(0,1fr) 17px;position:relative;flex:none}
.view{overflow:hidden}
table{width:1512px}
.item td{background-color:#ade8fb}
.code{display:flex;align-items:center}
.code button{width:13px;height:13px;border:1px solid #808080;background:linear-gradient(#222,#222) center/7px 1px no-repeat,linear-gradient(135deg,#fff,#cfd2dc);margin-right:4px;flex:none}
.item .code{padding-left:10px}
.leafitem .code{padding-left:27px}
.kid .code{padding-left:37px}
.kid td.k{background:linear-gradient(#ccc,#ccc) 8px 0/1px 100% no-repeat,linear-gradient(#ccc,#ccc) 18px 0/1px 50% no-repeat,linear-gradient(#ccc,#ccc) 18px 50%/17px 1px no-repeat}
.kid.more td.k{background-size:1px 100%,1px 100%,17px 1px}
.item td.k{background-image:linear-gradient(#bcd,#bcd),linear-gradient(#bcd,#bcd);background-position:8px 0,18px 100%;background-size:1px 100%,1px 50%;background-repeat:no-repeat}
.leafitem td.k{background-position:8px 0,8px 50%;background-size:1px 100%,16px 1px}
.red{color:#f00;font-weight:700}
.sel{box-shadow:inset 0 0 0 2px #3ca9d6}
.sel div{display:flex;justify-content:space-between;align-items:center}
.sel button{line-height:10px;color:#4b8fc0}
scroll-bar[h]{grid-column:1}`,
`<div class="view"><table><colgroup>${[22,206,41,338,313,166,81,86,86,86,87].map(w=>`<col style="width:${w}px">`).join('')}</colgroup>
<thead><tr><th></th>${['编码','类别','名称','项目特征','单位','汇总类别','工程量表达式','工程量','综合单价','综合合价'].map(t=>`<th class="${t=='工程量表达式'?'cur':''}">${t}</th>`).join('')}</tr></thead><tbody>
${ROWS.map((r,i)=>{const item=!!r[0],solo=r[0]=='17',more=!item&&ROWS[i+1]&&!ROWS[i+1][0];
return `<tr class="${item?'item':'kid'} ${solo?'leafitem':''} ${more?'more':''}"><th class="${r[0]=='16'?'cur':''}">${r[0]}</th><td class="k"><div class="code">${item&&!solo?'<button aria-label="折叠"></button>':''}${r[1]}</div></td><td class="c">${r[2]}</td><td>${r[3]}</td><td>${r[4]}</td><td>${r[5]}</td><td></td>${r[0]=='16'?`<td class="sel"><div>${r[6]}<button aria-label="编辑">⋯</button></div></td>`:`<td>${r[6]}</td>`}<td class="n">${r[7]}</td><td class="n ${item&&!solo?'red':''}">${r[8]}</td><td class="n">${r[9]}</td></tr>`}).join('')}
</tbody></table></div><scroll-bar shares="138 211 184"></scroll-bar><scroll-bar h shares="0 1279 180"></scroll-bar>`);

define('detail-grid', TABLE+`
:host{display:flex;overflow:hidden;flex:1;min-height:0;justify-content:space-between}
table{width:760px;align-self:flex-start}
.sum td{background:#ccffff}
td.y{background:#ffffe6}
input{appearance:none;width:12px;height:12px;border:1px solid #999;margin:0;display:inline-block;vertical-align:top;position:relative;background:#fff}
input:checked::after{content:"";position:absolute;left:3px;top:0;width:3px;height:6px;border:solid #555;border-width:0 1px 1px 0;transform:rotate(40deg)}`,
`<table><colgroup>${[21,81,117,192,66,63,78,69,73].map(w=>`<col style="width:${w}px">`).join('')}</colgroup>
<thead><tr><th></th>${['楼层','位置/名称','计算式','相同数量','结果','累加标识','引用代码','备注'].map(t=>`<th>${t}</th>`).join('')}</tr></thead><tbody>
<tr class="sum"><th>0</th><td></td><td>计算结果</td><td></td><td></td><td class="c"><b>0</b></td><td></td><td></td><td></td></tr>
${[1,2,3,4,5,6,7].map(i=>`<tr><th>${i}</th><td></td><td></td><td>0</td><td class="n">1</td><td class="y c">0</td><td class="c"><input type="checkbox" checked aria-label="累加标识 ${i}"></td><td></td><td></td></tr>`).join('')}
<tr><th> </th><td></td><td></td><td></td><td></td><td class="y"></td><td class="c"><input type="checkbox" aria-label="累加标识"></td><td></td><td></td></tr>
</tbody></table><scroll-bar shares="0 122 45"></scroll-bar>`);
define('variable-grid', TABLE+`
:host{display:flex;flex-direction:column;min-width:0;overflow:hidden}
table{width:441px}
tbody td{background:#eeeddf}
td.sel{box-shadow:inset -1px -1px 0 1px #808080}
scroll-bar{margin-top:auto}`,
`<table><colgroup>${[21,76,113,47,101,83].map(w=>`<col style="width:${w}px">`).join('')}</colgroup>
<thead><tr><th></th><th class="cur">变量名</th><th>变量说明</th><th>单位</th><th>计算公式</th><th style="text-align:left;padding-left:12px">变量值</th></tr></thead>
<tbody><tr><th class="cur">1</th><td class="c sel">JZMJ</td><td>建筑面积</td><td>m2</td><td>20552.41</td><td style="padding-left:8px">20552.41</td></tr></tbody></table>
<scroll-bar h shares="0 276 68"></scroll-bar>`);

define('detail-pane', `
:host{display:flex;flex-direction:column;flex:1;min-height:0}
.grip{height:8px;display:flex;justify-content:center;padding-right:36px}
.grip button{width:84px;height:6px;background:#7fc56b;margin-top:-1px}
.body{flex:1;display:flex;min-height:0;border-top:2px solid #7fc56b;margin-top:-2px}
.l{display:flex;flex-direction:column;flex:1;min-width:0}
p{margin:0;height:27px;padding-top:4px;color:#0000f0;font:12px/16px ${SONG}}
.split{width:6px;margin-left:9px;border-left:1px solid #e0e0e0;display:flex;align-items:flex-start;padding-top:45px}
.split button{width:6px;height:84px;background:#7fc56b;margin-left:-1px;flex:none}
svg{display:block;margin:auto}
variable-grid{margin-left:3px;flex:0 0 373px;border-left:1px solid #d9d9d9}`,
`<div class="grip"><button aria-label="收起明细"><svg width="10" height="6"><path d="M2 0l3 3 3-3M2 2l3 3 3-3" stroke="#fff" fill="none"/></svg></button></div>
<tab-strip green on="5" tabs="工料机显示,单价构成,标准换算,换算信息,特征及内容,工程量明细,反查图形工程量,说明信息,组价方案"></tab-strip>
<div class="body"><div class="l"><detail-grid></detail-grid><p>说明：在计算式中，如需要注释请填写在 { } 内.</p></div>
<div class="split"><button aria-label="收起变量"><svg width="6" height="10"><path d="M4 1L0 5l4 4M6 3L4 5l2 2" stroke="#fff" fill="none"/></svg></button></div><variable-grid></variable-grid></div>`);

/* ---------- status bar ---------- */
define('status-bar', `
:host{display:flex;height:27px;align-items:center;background:#f0f0f0;border-top:1px solid #a8a8a8;white-space:nowrap;color:#222;font-family:"Open Sans","Noto Sans CJK SC",sans-serif}
span{padding:0 26px 0 16px;border-right:1px solid #a0a8b0;height:18px;line-height:18px}
span:first-of-type{padding-left:10px}
.score{width:80px;height:22px;background:#4499ff;border-radius:3px;color:#fff;text-align:center;margin-left:28px}
.v{margin-left:auto;display:flex;gap:22px;padding:0 10px 0 22px;border-left:1px solid #a0a8b0;height:18px;align-items:center}
.v button{display:flex}`,
`${['计税方式：增值税（一般计税方法）','工程量清单项目计量规范(2013-江苏)','江苏省建筑与装饰工程计价定额(2014)','江苏省建筑与装饰工程计价定额','苏建函价〔2019〕178号','1114602260@qq.com'].map(t=>`<span>${t}</span>`).join('')}
<button class="score">0分</button><div class="v">${['s1','s2','s3'].map(n=>`<button aria-label="视图">${ic(n)}</button>`).join('')}</div>`);

/* ---------- hand-drawn notes over the grid ---------- */
define('note-layer', `
:host{position:absolute;inset:0;pointer-events:none;color:#3f48cc}
.box{position:absolute;left:27px;top:61px;width:245px;height:40px;border:5px solid #000}
svg{position:absolute;left:123px;top:112px}
p{position:absolute;left:172px;top:247px;margin:0;font-size:27px;line-height:45px;white-space:pre;font-weight:350}`,
`<div class="box"></div><svg width="24" height="164"><path d="M12 4L10 30 4 80 2 83h6v76h8V83h6l-2-3L14 30z" fill="none" stroke="#3f48cc" stroke-width="4" stroke-linejoin="round"/></svg>
<p>请问各位大神，这个
是什么情况?
正常使用这个计价软
件应该没有备注与
补，不明白，请指教</p>`);
define('usage-meter', `:host{position:absolute;right:2px;top:213px;width:10px;height:66px;border:1px solid #b8b8c0;border-radius:5px;background:linear-gradient(#44465e 55%,#5cf59a 55%,#2ee6e6);}`, '');

/* ---------- page ---------- */
define('budget-app', `
:host{display:flex;flex-direction:column;height:100vh;min-height:900px}
.main{flex:1;display:flex;min-height:0}
.left{width:210px;display:flex;flex-direction:column;flex:none}
.gap{width:20px;flex:none}
.right{flex:1;min-width:0;display:flex;flex-direction:column;border-left:1px solid #d9d9d9}
.work{flex:1;display:flex;min-height:0}
.grids{flex:1;min-width:0;display:flex;flex-direction:column;margin-left:5px;border-left:1px solid #d9d9d9;position:relative}`,
`<task-bar></task-bar><title-bar></title-bar><menu-bar></menu-bar><ribbon-bar></ribbon-bar>
<div class="main"><div class="left"><tab-strip on="0" tabs="项目结构,快速查询"></tab-strip><project-tree></project-tree></div>
<div class="gap"><button aria-label="收起">${ic('collapse')}</button></div>
<div class="right"><tab-strip strong on="3" tabs="造价分析,工程概况,取费设置,分部分项,措施项目,其他项目,人材机汇总,费用汇总"></tab-strip>
<div class="work"><section-tree></section-tree><div class="grids"><cost-grid></cost-grid><detail-pane></detail-pane><note-layer></note-layer><usage-meter></usage-meter></div></div></div></div>
<status-bar></status-bar>`);
</script>
</body>
</html>
